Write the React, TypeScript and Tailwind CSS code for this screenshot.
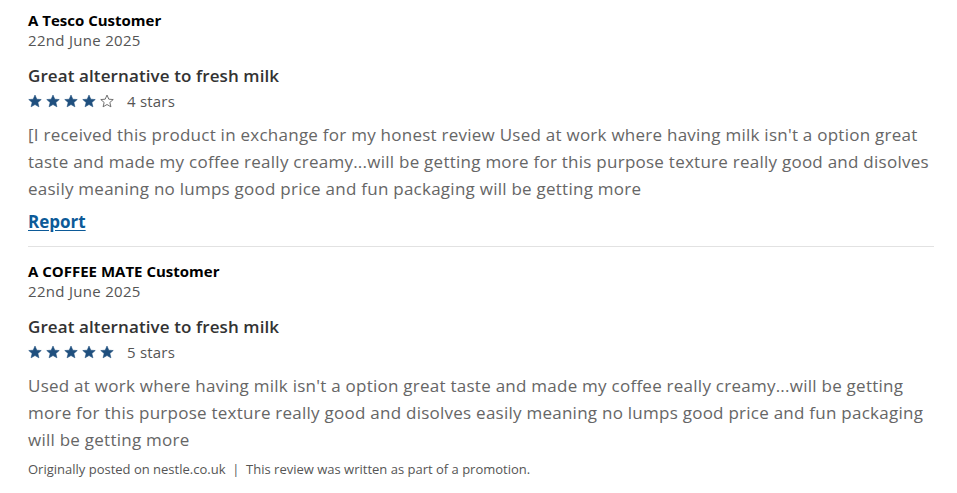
import React from 'react'

const reviews = [
  {
    name: 'A Tesco Customer',
    date: '22nd June 2025',
    title: 'Great alternative to fresh milk',
    rating: 4,
    body:
      "[I received this product in exchange for my honest review Used at work where having milk isn't a option great taste and made my coffee really creamy...will be getting more for this purpose texture really good and disolves easily meaning no lumps good price and fun packaging will be getting more",
    report: true,
  },
  {
    name: 'A COFFEE MATE Customer',
    date: '22nd June 2025',
    title: 'Great alternative to fresh milk',
    rating: 5,
    body:
      "Used at work where having milk isn't a option great taste and made my coffee really creamy...will be getting more for this purpose texture really good and disolves easily meaning no lumps good price and fun packaging will be getting more",
    report: false,
  },
]

function Star({ filled }: { filled: boolean }) {
  return (
    <svg width="14" height="14" viewBox="0 0 24 24" aria-hidden>
      <path
        d="M12 1.8l3.1 7.1 7.6.6-5.8 5 1.8 7.5L12 18l-6.7 4 1.8-7.5-5.8-5 7.6-.6z"
        fill={filled ? '#1f4f7e' : 'none'}
        stroke={filled ? '#1f4f7e' : '#666'}
        strokeWidth={filled ? 1 : 1.6}
        strokeLinejoin="round"
      />
    </svg>
  )
}

export default function App() {
  return (
    <div className="w-[957px] h-[493px] bg-white px-[28px] font-['Open_Sans',sans-serif] overflow-hidden">
      <div className="w-[906px]">
        {reviews.map((r, i) => (
          <div
            key={i}
            className={
              i === 0
                ? 'pt-[10px] pb-[12px] border-b border-[#e2e2e2]'
                : 'pt-[14px]'
            }
          >
            <div className="text-[15px] leading-[20px] font-bold text-black">
              {r.name}
            </div>
            <div className="text-[15px] leading-[20px] tracking-[0.3px] text-[#555]">
              {r.date}
            </div>
            <h3 className="mt-[14px] text-[17px] leading-[24px] font-semibold tracking-[0.1px] text-[#333]">
              {r.title}
            </h3>
            <div className="mt-[3px] flex items-center h-[20px]">
              <div className="flex gap-[4px]">
                {[0, 1, 2, 3, 4].map((s) => (
                  <Star key={s} filled={s < r.rating} />
                ))}
              </div>
              <span className="ml-[13px] text-[15px] tracking-[0.2px] text-[#555]">
                {r.rating} stars
              </span>
            </div>
            <p className="mt-[10px] text-[17px] leading-[27px] tracking-[0.25px] text-[#666]">
              {r.body}
            </p>
            {r.report ? (
              <a
                href="#"
                className="mt-[8px] block w-fit text-[17px] leading-[24px] font-bold text-[#0c5a98] underline underline-offset-2"
              >
                Report
              </a>
            ) : (
              <div className="mt-[8px] text-[13px] leading-[16px] text-[#555]">
                Originally posted on nestle.co.uk&nbsp; | &nbsp;This review was written
                as part of a promotion.
              </div>
            )}
          </div>
        ))}
      </div>
    </div>
  )
}
